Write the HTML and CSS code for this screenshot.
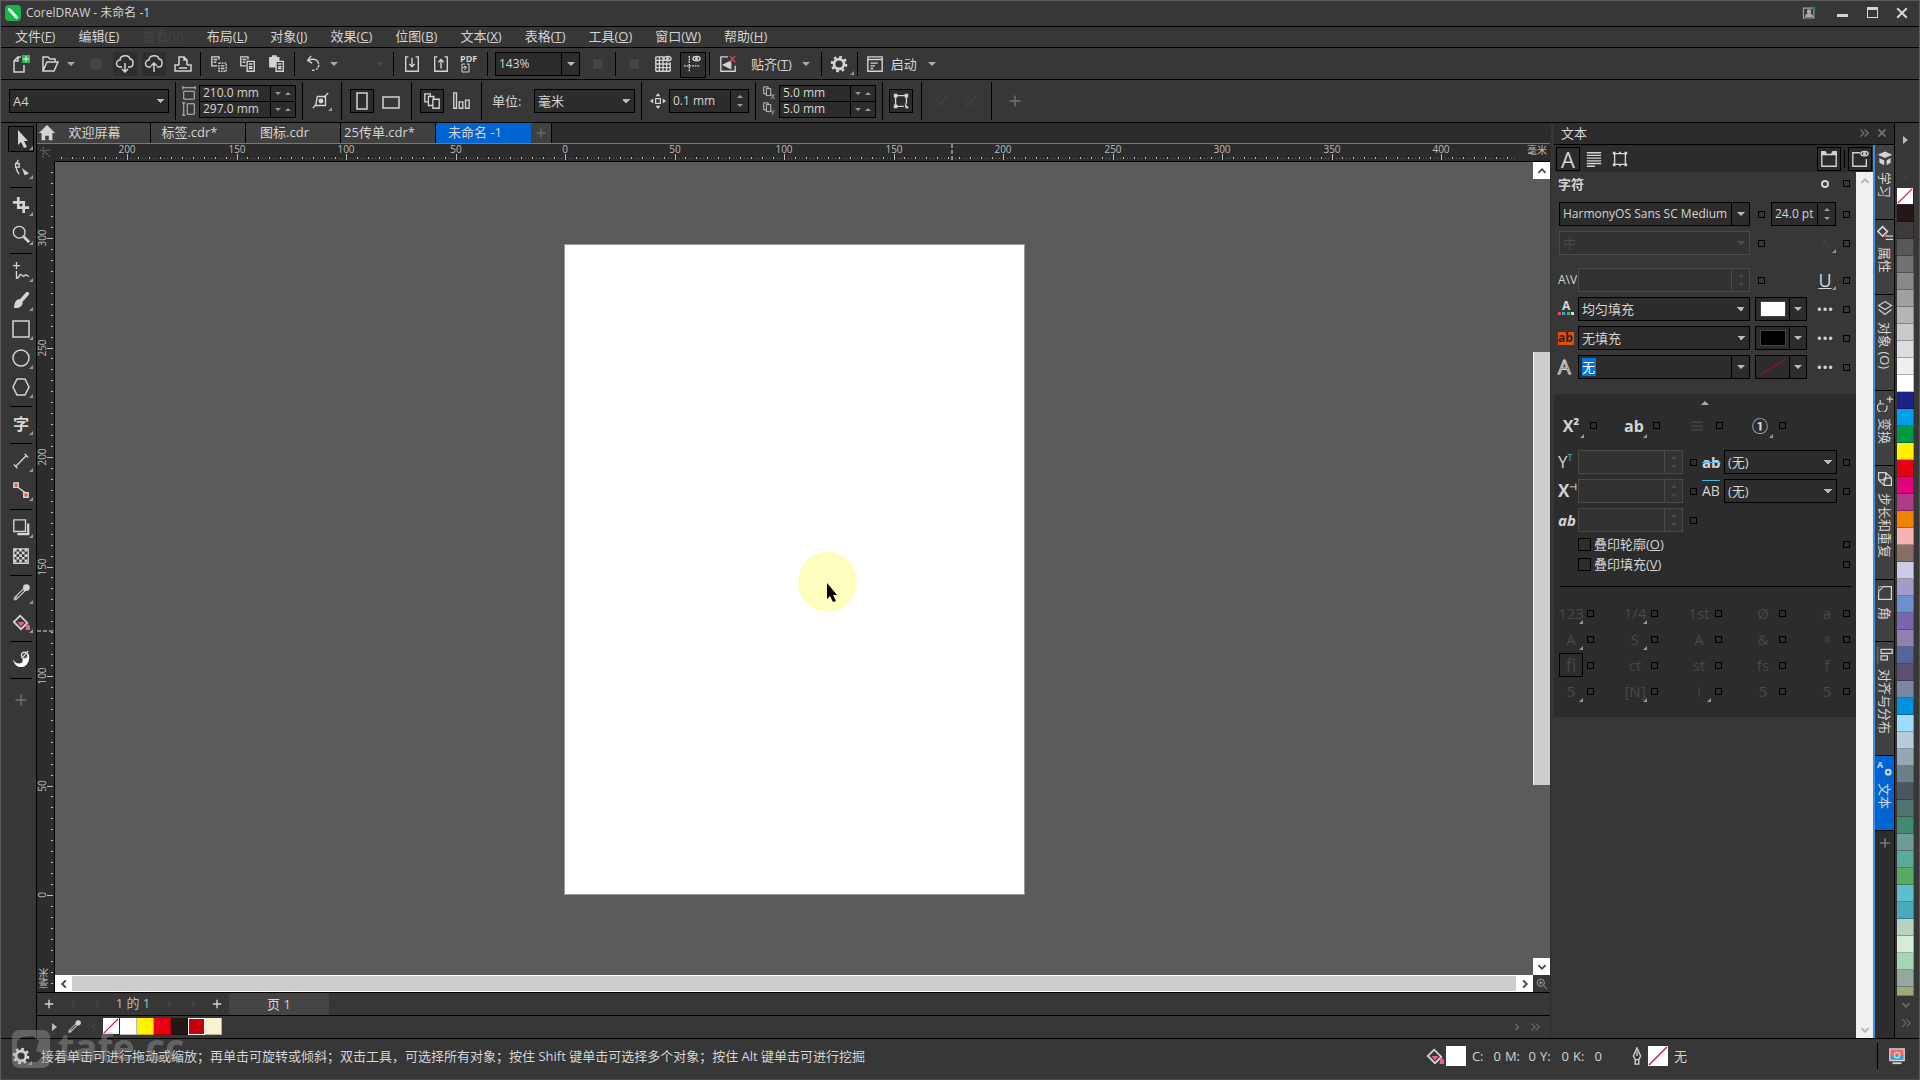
FILE: index.html
```html
<!DOCTYPE html>
<html lang="zh-CN">
<head>
<meta charset="utf-8">
<title>CorelDRAW - 未命名 -1</title>
<link rel="stylesheet" href="styles.css">
</head>
<body>
<svg class="sprite" aria-hidden="true">
  <symbol id="new" viewBox="0 0 20 20"><path d="M10 3H7L3 7v11h10v-7M7 3v4H3"/><path d="M11 1h8v8h-8z" fill="#2fb457" stroke="none"/><path d="M15 2v6M12 5h6" stroke="#eee" stroke-width="1"/></symbol>
  <symbol id="open" viewBox="0 0 20 20"><path d="M3 17V3h5l2 2h5v3M3 17h11l4-9H7z"/></symbol>
  <symbol id="save" viewBox="0 0 20 20"><path d="M3 3h14v14H3z" fill="currentColor" stroke="none"/></symbol>
  <symbol id="clouddown" viewBox="0 0 20 20"><path d="M7 13H5a3.500 3.500 0 0 1 0-7c0-5 9-6 10-1 4 0 4 8 0 8h-2M10 9v9M7 15l3 3 3-3"/></symbol>
  <symbol id="cloudup" viewBox="0 0 20 20"><path d="M7 13H5a3.500 3.500 0 0 1 0-7c0-5 9-6 10-1 4 0 4 8 0 8h-2M10 18V9M7 12l3-3 3 3"/></symbol>
  <symbol id="print" viewBox="0 0 20 20"><path d="M6 11V3h5l3 3v5M11 3v3h3M6 11H2v6h16v-6h-4M6 14h8"/></symbol>
  <symbol id="cut" viewBox="0 0 20 20"><path d="M8 12H2V2h8v3M4 5h4M4 8h3"/><path d="M10 9h8v9h-8z" stroke-dasharray="2 1"/><path d="M12 12h4M12 15h4"/></symbol>
  <symbol id="copy" viewBox="0 0 20 20"><path d="M8 12H2V2h8v3M4 5h4M4 8h3"/><path d="M9 7h8v11H9zM11 10h4M11 13h4M11 15h4"/></symbol>
  <symbol id="paste" viewBox="0 0 20 20"><path d="M2 3h3V1h4v2h3v3H8v7H2z" fill="currentColor"/><path d="M9 7h8v11H9zM11 10h4M11 13h4M11 15h4"/></symbol>
  <symbol id="undo" viewBox="0 0 20 20"><path d="M5 6c8-4 13 2 11 7-1 3-4 4-7 4" stroke-dasharray="14 1 3 1 2 2"/><path d="M8 1L4 6l5 3"/></symbol>
  <symbol id="import" viewBox="0 0 20 20"><path d="M6 2H3v16h14V2h-3M10 3v10M7 10l3 3 3-3"/></symbol>
  <symbol id="export" viewBox="0 0 20 20"><path d="M6 2H3v16h14V2h-3M10 15V5M7 8l3-3 3 3"/></symbol>
  <symbol id="pdf" viewBox="0 0 20 20"><text x="0" y="8" font-size="9" font-weight="bold">PDF</text><path d="M5 10H2v8h7v-8H7M5 16v-4M3 14l2-2 2 2" stroke-width="1"/></symbol>
  <symbol id="grid" viewBox="0 0 20 20"><path d="M2 2h9M2 6h16M2 10h16M2 14h16M2 18h16M2 2v16M6 2v16M10 2v16M14 8v10M18 8v10"/><ellipse cx="15" cy="4" rx="4" ry="2.500"/><circle cx="15" cy="4" r="1"/></symbol>
  <symbol id="guides" viewBox="0 0 20 20"><path d="M7 1v18M1 12h18" stroke-dasharray="2 1"/><ellipse cx="15" cy="4" rx="4" ry="2.500"/><circle cx="15" cy="4" r="1"/></symbol>
  <symbol id="snapoff" viewBox="0 0 20 20"><path d="M10 2H2v16h16v-6"/><path d="M5 11l8-4v8z" fill="currentColor"/><path d="M12 1l6 7M18 1l-6 7" stroke="#e0425f"/></symbol>
  <symbol id="gear" viewBox="0 0 20 20"><circle cx="10" cy="10" r="5.500" stroke-width="3"/><circle cx="10" cy="10" r="8" stroke-width="2.500" stroke-dasharray="3.100 3.180"/></symbol>
  <symbol id="launch" viewBox="0 0 20 20"><path d="M2 2h16v16H2zM2 5h16M5 9h8M5 12h5M5 15h3"/></symbol>
  <symbol id="pagew" viewBox="0 0 16 16"><path d="M1 2h14M1 0v4M15 0v4M2 6h12v9H2z" stroke-width="1"/></symbol>
  <symbol id="pageh" viewBox="0 0 16 16"><path d="M2 1v14M0 1h4M0 15h4M6 2h8v12H6z" stroke-width="1"/></symbol>
  <symbol id="drawunit" viewBox="0 0 20 20"><path d="M6 5h9v10H4zM18 1l-5 5M5 13l-4 5"/><circle cx="10" cy="10" r="2" fill="currentColor"/></symbol>
  <symbol id="portrait" viewBox="0 0 20 20"><path d="M5 2h10v16H5z"/></symbol>
  <symbol id="landscape" viewBox="0 0 20 20"><path d="M2 6h16v11H2z"/></symbol>
  <symbol id="allpages" viewBox="0 0 20 20"><path d="M6 11H2V2h6v3M11 15H6V5h6v3M11 8h7v10h-7z"/></symbol>
  <symbol id="curpage" viewBox="0 0 20 20"><path d="M2 1h3v17H2zM8 11h4v7H8zM15 9h4v9h-4z"/></symbol>
  <symbol id="nudge" viewBox="0 0 20 20"><path d="M7 7h6v6H7z"/><path d="M10 0l3 4H7zM10 20l3-4H7zM0 10l4-3v6zM20 10l-4-3v6z" fill="currentColor" stroke="none"/></symbol>
  <symbol id="dupx" viewBox="0 0 16 16"><path d="M5 9H2V1h5v2M5 3h5v8H5z" stroke-width="1"/><text x="10" y="15" font-size="8">X</text></symbol>
  <symbol id="dupy" viewBox="0 0 16 16"><path d="M5 9H2V1h5v2M5 3h5v8H5z" stroke-width="1"/><text x="10" y="15" font-size="8">Y</text></symbol>
  <symbol id="treat" viewBox="0 0 20 20"><path d="M4 4h12v9M4 4v12h9"/><path d="M2 2h4v4H2zM14 2h4v4h-4zM2 14h4v4H2zM14 12l5 6h-4z" fill="currentColor" stroke="none"/></symbol>
  <symbol id="wand" viewBox="0 0 20 20"><path d="M3 10l4-5M4 17l12-13M10 12l4 4"/></symbol>
  <symbol id="plus" viewBox="0 0 20 20"><path d="M10 4v12M4 10h12" stroke-width="2"/></symbol>
  <symbol id="home" viewBox="0 0 20 20"><path d="M10 1l9 9h-3v8h-4v-5H8v5H4v-8H1z" fill="currentColor" stroke="none"/></symbol>
  <symbol id="pick" viewBox="0 0 20 20"><path d="M7 1v15l3-3 3 6 3-1-3-6h4z" fill="currentColor" stroke="none"/></symbol>
  <symbol id="shape" viewBox="0 0 20 20"><path d="M7 1C3 7 4 12 8 17"/><path d="M4 5h4v4H4z" fill="#373737"/><path d="M11 10l8 6-5 2z" fill="currentColor" stroke="none"/></symbol>
  <symbol id="crop" viewBox="0 0 20 20"><path d="M1 7h12v12M7 1v12h12" stroke-width="3"/></symbol>
  <symbol id="zoom" viewBox="0 0 20 20"><circle cx="8" cy="8" r="6.500"/><path d="M13 13l6 6" stroke-width="3"/></symbol>
  <symbol id="freehand" viewBox="0 0 20 20"><path d="M5 0v8M1 4h8M5 10v8c3 1 3-5 5-4s2 3 4 1 3 1 5 1"/></symbol>
  <symbol id="brush" viewBox="0 0 20 20"><path d="M17 3l-8 9" stroke-width="4" stroke-linecap="round"/><path d="M8 9l4 4c-1 5-5 6-10 6 1-4 1-9 6-10z" fill="currentColor" stroke="none"/></symbol>
  <symbol id="rect" viewBox="0 0 20 20"><path d="M2 2h16v16H2z"/></symbol>
  <symbol id="ellipse" viewBox="0 0 20 20"><circle cx="10" cy="10" r="8"/></symbol>
  <symbol id="polygon" viewBox="0 0 20 20"><path d="M6 2h8l4 8-4 8H6l-4-8z"/></symbol>
  <symbol id="type" viewBox="0 0 20 20"><text x="1" y="17" font-size="18" font-weight="bold">字</text></symbol>
  <symbol id="dimension" viewBox="0 0 20 20"><path d="M4 16L16 4M2 14l4 4M14 2l4 4"/></symbol>
  <symbol id="connector" viewBox="0 0 20 20"><path d="M4 5l12 9"/><path d="M2 2h5v5H2zM13 13h5v5h-5z" fill="#e8603c"/></symbol>
  <symbol id="shadow" viewBox="0 0 20 20"><path d="M2 2h13v13H2z"/><path d="M6 18h12V6" stroke-width="2.500"/></symbol>
  <symbol id="checker" viewBox="0 0 20 20"><path d="M2 2h16v16H2z"/><path d="M2 2h3v3H2zM8 2h3v3H8zM14 2h3v3h-3zM5 5h3v3H5zM11 5h3v3h-3zM2 8h3v3H2zM8 8h3v3H8zM14 8h3v3h-3zM5 11h3v3H5zM11 11h3v3h-3zM2 14h3v3H2zM8 14h3v3H8zM14 14h3v3h-3z" fill="currentColor" stroke="none"/></symbol>
  <symbol id="dropper" viewBox="0 0 20 20"><path d="M3 17L14 6" stroke-width="4"/><path d="M4 16L13 7" stroke="#373737"/><path d="M2 18l4-4" stroke="#e9a27c"/><circle cx="16" cy="4" r="3" fill="currentColor"/></symbol>
  <symbol id="bucket" viewBox="0 0 20 20"><path d="M9 3l8 8-7 7-8-8z" stroke-width="2"/><path d="M6 10h8l-4 5zM16 12l4 2v5h-5z" fill="#e8637c" stroke="none"/></symbol>
  <symbol id="smear" viewBox="0 0 20 20"><path d="M1 10c2 5 7 6 10 4 2-2 0-4 1-6l3-4 3 0 1 2c1 8-4 13-9 13-5 0-8-4-9-9z" fill="#fff" stroke="none"/><circle cx="14" cy="6" r="3.500" fill="#373737"/><path d="M12 8l6-7"/></symbol>
  <symbol id="para" viewBox="0 0 20 20"><path d="M2 3h16M2 6h16M2 9h16M2 12h16M2 15h16M2 18h9"/></symbol>
  <symbol id="frame" viewBox="0 0 20 20"><path d="M4 4h12v12H4z"/><path d="M2 2h3v3H2zM15 2h3v3h-3zM2 15h3v3H2zM15 15h3v3h-3zM9 2h2v2H9zM9 16h2v2H9z" fill="currentColor" stroke="none"/></symbol>
  <symbol id="dockwin" viewBox="0 0 20 20"><path d="M2 5V2h3l2 3h6l2-3h3v16H2V5"/><path d="M2 5V2h4l1 3zM18 5V2h-4l-1 3z" fill="currentColor"/></symbol>
  <symbol id="dockeye" viewBox="0 0 20 20"><path d="M10 3H2v15h15v-8"/><ellipse cx="15" cy="4" rx="4" ry="2.500"/><circle cx="15" cy="4" r="1"/></symbol>
  <symbol id="learn" viewBox="0 0 20 20"><path d="M1 6l9-4 9 4-9 4zM3 10l6 3v6l-6-3zM12 13l5-3v6l-5 3z" fill="currentColor" stroke="none"/></symbol>
  <symbol id="props" viewBox="0 0 20 20"><path d="M7 2l6 6-6 6-6-6z" stroke-width="2"/><path d="M13 10l-4 5" stroke="#e8603c"/><path d="M11 14h9M11 18h9"/></symbol>
  <symbol id="layers" viewBox="0 0 20 20"><path d="M10 2l8 5-8 5-8-5zM2 12l8 6 8-6"/></symbol>
  <symbol id="transform" viewBox="0 0 20 20"><path d="M4 9a6 6 0 1 0 8 3M4 5v5h5M16 0v8M12 4h8"/></symbol>
  <symbol id="step" viewBox="0 0 20 20"><path d="M2 2h9v9H2zM9 9h9v9H9zM11 2l7 7M2 11l7 7"/></symbol>
  <symbol id="corner" viewBox="0 0 20 20"><path d="M8 2h10v16H2V8z"/><path d="M2 6V2h5" stroke-dasharray="1 1"/></symbol>
  <symbol id="align" viewBox="0 0 20 20"><path d="M5 3h14v5H5zM5 11h8v5H5z"/><path d="M1 0v20" stroke="#36a3b8" stroke-dasharray="2 1"/></symbol>
  <symbol id="textdock" viewBox="0 0 20 20"><text x="0" y="9" font-size="11" font-weight="bold">A</text><circle cx="14" cy="14" r="3" stroke-width="2.500"/></symbol>
  <symbol id="pen" viewBox="0 0 20 20"><path d="M10 1l4 9-2 4H8l-2-4zM10 5v5M8 14h4v5H8z"/></symbol>
  <symbol id="monitor" viewBox="0 0 20 20"><path d="M2 2h16v13H2z" fill="#f06a62"/><path d="M3 9h14v5H3z" fill="#2aa9df" stroke="none"/><circle cx="10" cy="9" r="3"/><path d="M5 18h10" stroke-width="2"/></symbol>
  <symbol id="user" viewBox="0 0 20 20"><path d="M2 3h15v14H2z"/><circle cx="10" cy="8" r="2.500" fill="currentColor"/><path d="M5 15c1-5 9-5 10 0z" fill="currentColor"/><path d="M14 1h5v5h-5z" fill="#2b7d72" stroke="none"/></symbol>
  <symbol id="none" viewBox="0 0 20 20"><path d="M0 0h20v20H0z" fill="#fff" stroke="none"/><path d="M1 19L19 1" stroke="#c02038" stroke-width="1.500"/></symbol>
  <symbol id="left" viewBox="0 0 20 20"><path d="M13 4l-6 6 6 6" stroke-width="3"/></symbol>
  <symbol id="right" viewBox="0 0 20 20"><path d="M7 4l6 6-6 6" stroke-width="3"/></symbol>
  <symbol id="up" viewBox="0 0 20 20"><path d="M4 13l6-6 6 6" stroke-width="3"/></symbol>
  <symbol id="down" viewBox="0 0 20 20"><path d="M4 7l6 6 6-6" stroke-width="3"/></symbol>
  <symbol id="dbl" viewBox="0 0 20 20"><path d="M4 4l6 6-6 6M11 4l6 6-6 6" stroke-width="2"/></symbol>
  <symbol id="close" viewBox="0 0 20 20"><path d="M4 4l12 12M16 4L4 16" stroke-width="2.500"/></symbol>
  <symbol id="navzoom" viewBox="0 0 20 20"><circle cx="8" cy="8" r="6"/><path d="M8 5v6M5 8h6M13 13l5 5"/></symbol>
</svg>

<div class="window">
  <header class="title">
    <svg class="logo" viewBox="0 0 16 16" aria-hidden="true"><rect width="16" height="16" rx="4" fill="#17b54a"/><path d="M3 3l3 1 7 8-1 2-2-1-7-8z" fill="#fff"/></svg>
    <span class="grow">CorelDRAW - 未命名 -1</span>
    <button aria-label="账户"><svg class="ic s14"><use href="#user"/></svg></button>
    <button class="min" aria-label="最小化"><i></i></button>
    <button class="max" aria-label="最大化"><i></i></button>
    <button aria-label="关闭"><svg class="ic s16"><use href="#close"/></svg></button>
  </header>

  <nav class="menu">
    <button>文件(<u>F</u>)</button><button>编辑(<u>E</u>)</button><button disabled>查看(<u>V</u>)</button><button>布局(<u>L</u>)</button><button>对象(<u>J</u>)</button><button>效果(<u>C</u>)</button><button>位图(<u>B</u>)</button><button>文本(<u>X</u>)</button><button>表格(<u>T</u>)</button><button>工具(<u>O</u>)</button><button>窗口(<u>W</u>)</button><button>帮助(<u>H</u>)</button>
  </nav>

  <div class="bar standard" role="toolbar">
    <button class="slot" aria-label="新建"><svg class="ic"><use href="#new"/></svg></button>
    <button class="slot" aria-label="打开"><svg class="ic"><use href="#open"/></svg></button>
    <button class="dd" aria-label="打开选项"></button>
    <button class="slot" disabled aria-label="保存"><svg class="ic s16"><use href="#save"/></svg></button>
    <button class="slot tint" aria-label="从云端下载"><svg class="ic"><use href="#clouddown"/></svg></button>
    <button class="slot tint" aria-label="上传到云端"><svg class="ic"><use href="#cloudup"/></svg></button>
    <button class="slot" aria-label="打印"><svg class="ic"><use href="#print"/></svg></button>
    <i class="sep"></i>
    <button class="slot" aria-label="剪切"><svg class="ic s18"><use href="#cut"/></svg></button>
    <button class="slot" aria-label="复制"><svg class="ic s18"><use href="#copy"/></svg></button>
    <button class="slot" aria-label="粘贴"><svg class="ic s18"><use href="#paste"/></svg></button>
    <i class="sep"></i>
    <button class="slot" aria-label="撤消"><svg class="ic s18"><use href="#undo"/></svg></button>
    <button class="dd" aria-label="撤消列表"></button>
    <button class="slot" disabled aria-label="重做"></button>
    <button class="dd" disabled aria-label="重做列表"></button>
    <i class="sep"></i>
    <button class="slot" aria-label="导入"><svg class="ic s18"><use href="#import"/></svg></button>
    <button class="slot" aria-label="导出"><svg class="ic s18"><use href="#export"/></svg></button>
    <button class="slot" aria-label="发布为 PDF"><svg class="ic"><use href="#pdf"/></svg></button>
    <i class="sep"></i>
    <div class="combo split zoomlevel"><input aria-label="缩放级别" value="143%"></div>
    <button class="slot" disabled aria-label="全屏预览"><svg class="ic s14"><use href="#save"/></svg></button>
    <i class="sep"></i>
    <button class="slot" disabled aria-label="显示标尺"><svg class="ic s14"><use href="#save"/></svg></button>
    <button class="slot" aria-label="显示网格"><svg class="ic s18"><use href="#grid"/></svg></button>
    <button class="slot boxed" aria-label="显示辅助线"><svg class="ic s18"><use href="#guides"/></svg></button>
    <i class="sep"></i>
    <button class="slot" aria-label="关闭贴齐"><svg class="ic s18"><use href="#snapoff"/></svg></button>
    <button class="wordbtn snap">贴齐(<u>T</u>)</button><button class="dd" aria-label="贴齐选项"></button>
    <i class="sep"></i>
    <button class="slot fly" aria-label="选项"><svg class="ic s18"><use href="#gear"/></svg></button>
    <i class="sep"></i>
    <button class="slot" aria-label="应用程序启动器"><svg class="ic s18"><use href="#launch"/></svg></button>
    <button class="wordbtn">启动</button><button class="dd" aria-label="启动列表"></button>
  </div>

  <div class="bar property" role="toolbar">
    <select class="combo-select w160" aria-label="页面大小"><option>A4</option></select>
    <i class="sep mid"></i>
    <div class="stack">
      <label><svg class="ic s14"><use href="#pagew"/></svg><span class="num flat"><input value="210.0 mm" aria-label="页面宽度"><span class="spin"><button aria-label="减"></button><button aria-label="加"></button></span></span></label>
      <label><svg class="ic s14"><use href="#pageh"/></svg><span class="num flat"><input value="297.0 mm" aria-label="页面高度"><span class="spin"><button aria-label="减"></button><button aria-label="加"></button></span></span></label>
    </div>
    <i class="sep mid"></i>
    <div class="group"><button class="btn fly" aria-label="自动适合页面"><svg class="ic s18"><use href="#drawunit"/></svg></button></div>
    <i class="sep wide"></i>
    <div class="group"><button class="btn on" aria-label="纵向"><svg class="ic"><use href="#portrait"/></svg></button><button class="btn" aria-label="横向"><svg class="ic"><use href="#landscape"/></svg></button></div>
    <i class="sep wide"></i>
    <div class="group"><button class="btn on" aria-label="所有页面"><svg class="ic s18"><use href="#allpages"/></svg></button><button class="btn" aria-label="当前页面"><svg class="ic s18"><use href="#curpage"/></svg></button></div>
    <i class="sep wide"></i>
    <label class="unit" for="unit">单位:</label>
    <select class="combo-select w101" id="unit"><option>毫米</option></select>
    <i class="sep mid"></i>
    <label class="nudge"><svg class="ic s16"><use href="#nudge"/></svg><span class="num"><input value="0.1 mm" aria-label="微调距离"><span class="spin"><button aria-label="加"></button><button aria-label="减"></button></span></span></label>
    <i class="sep mid"></i>
    <div class="stack">
      <label><svg class="ic s14"><use href="#dupx"/></svg><span class="num flat"><input value="5.0 mm" aria-label="再制距离 X"><span class="spin"><button aria-label="减"></button><button aria-label="加"></button></span></span></label>
      <label><svg class="ic s14"><use href="#dupy"/></svg><span class="num flat"><input value="5.0 mm" aria-label="再制距离 Y"><span class="spin"><button aria-label="减"></button><button aria-label="加"></button></span></span></label>
    </div>
    <i class="sep mid"></i>
    <div class="group"><button class="btn on" aria-label="所有对象视为已填充"><svg class="ic s18"><use href="#treat"/></svg></button></div>
    <i class="sep wide"></i>
    <div class="group"><button class="btn" disabled aria-label="描摹"><svg class="ic s16"><use href="#wand"/></svg></button><button class="btn" disabled aria-label="编辑"><svg class="ic s16"><use href="#wand"/></svg></button></div>
    <i class="sep wide"></i>
    <button class="btn dim" aria-label="自定义"><svg class="ic s18"><use href="#plus"/></svg></button>
  </div>

  <main class="work">
    <aside class="toolbox">
      <button class="tool on fly" aria-label="选择"><svg class="ic"><use href="#pick"/></svg></button>
      <button class="tool fly" aria-label="形状"><svg class="ic s18"><use href="#shape"/></svg></button><hr>
      <button class="tool fly" aria-label="裁剪"><svg class="ic s18"><use href="#crop"/></svg></button>
      <button class="tool fly" aria-label="缩放"><svg class="ic s18"><use href="#zoom"/></svg></button><hr>
      <button class="tool fly" aria-label="手绘"><svg class="ic s18"><use href="#freehand"/></svg></button>
      <button class="tool fly" aria-label="艺术笔"><svg class="ic s18"><use href="#brush"/></svg></button>
      <button class="tool fly" aria-label="矩形"><svg class="ic"><use href="#rect"/></svg></button>
      <button class="tool fly" aria-label="椭圆形"><svg class="ic"><use href="#ellipse"/></svg></button>
      <button class="tool fly" aria-label="多边形"><svg class="ic"><use href="#polygon"/></svg></button><hr>
      <button class="tool fly" aria-label="文本"><svg class="ic s18"><use href="#type"/></svg></button><hr>
      <button class="tool fly" aria-label="平行度量"><svg class="ic s18"><use href="#dimension"/></svg></button>
      <button class="tool fly" aria-label="连接器"><svg class="ic s18"><use href="#connector"/></svg></button><hr>
      <button class="tool fly" aria-label="阴影"><svg class="ic s18"><use href="#shadow"/></svg></button>
      <button class="tool" aria-label="透明度"><svg class="ic s18"><use href="#checker"/></svg></button><hr>
      <button class="tool fly" aria-label="颜色滴管"><svg class="ic s18"><use href="#dropper"/></svg></button>
      <button class="tool fly" aria-label="交互式填充"><svg class="ic s18"><use href="#bucket"/></svg></button><hr>
      <button class="tool" aria-label="涂抹"><svg class="ic s18"><use href="#smear"/></svg></button><hr>
      <button class="tool add" aria-label="自定义"><svg class="ic s18"><use href="#plus"/></svg></button>
    </aside>

    <section class="doc">
      <div class="tabs">
        <button class="hometab" aria-label="主页"><svg class="ic s18"><use href="#home"/></svg></button>
        <button>欢迎屏幕</button><button>标签.cdr*</button><button>图标.cdr</button><button>25传单.cdr*</button><button class="active">未命名 -1</button>
        <button class="addtab" aria-label="新建文档"><svg class="ic s14"><use href="#plus"/></svg></button>
      </div>
      <div class="view">
        <div class="origin"><svg class="ic s14" viewBox="0 0 20 20"><path d="M2 6h16M6 2v16M8 8l8 8" stroke-dasharray="2 2"/></svg></div>
        <svg class="ruler" id="hruler"></svg><span class="hunit">毫米</span>
        <svg class="ruler" id="vruler"></svg><span class="vunit">毫米</span>
        <div class="canvas">
          <div class="paper"></div>
          <div class="halo"></div>
          <svg class="pointer" viewBox="0 0 10 19"><path d="M0 0v16l3-3 3 6 3-1-3-6h4z"/></svg>
        </div>
        <div class="vscroll"><button aria-label="向上"><svg class="ic s12"><use href="#up"/></svg></button><i class="track"></i><i class="thumb"></i><i class="rest"></i><button aria-label="向下"><svg class="ic s12"><use href="#down"/></svg></button></div>
        <div class="hscroll"><button aria-label="向左"><svg class="ic s12"><use href="#left"/></svg></button><i class="thumb"></i><button aria-label="向右"><svg class="ic s12"><use href="#right"/></svg></button></div>
        <button class="nav" aria-label="导航器"><svg class="ic s12"><use href="#navzoom"/></svg></button>
      </div>
      <div class="pages">
        <button aria-label="在前面添加页"><svg class="ic s14"><use href="#plus"/></svg></button>
        <button disabled aria-label="第一页"><svg class="ic s10"><use href="#left"/></svg></button>
        <button disabled aria-label="上一页"><svg class="ic s10"><use href="#left"/></svg></button>
        <span class="count">1 的 1</span>
        <button disabled aria-label="下一页"><svg class="ic s10"><use href="#right"/></svg></button>
        <button disabled aria-label="最后一页"><svg class="ic s10"><use href="#right"/></svg></button>
        <button aria-label="在后面添加页"><svg class="ic s14"><use href="#plus"/></svg></button>
        <button class="pagetab">页 1</button>
      </div>
      <div class="docpal">
        <button class="tri" aria-label="调色板菜单"></button>
        <button class="drop" aria-label="滴管"><svg class="ic s14"><use href="#dropper"/></svg></button>
        <button disabled aria-label="向左滚动"><svg class="ic s10"><use href="#left"/></svg></button>
        <div class="chips" id="docchips"></div>
        <span class="grow"></span>
        <button class="faint" aria-label="向右滚动"><svg class="ic s10"><use href="#right"/></svg></button>
        <button class="faint" aria-label="展开"><svg class="ic s12"><use href="#dbl"/></svg></button>
      </div>
    </section>

    <aside class="docker">
      <div class="dockhead"><span class="grow">文本</span><button aria-label="折叠"><svg class="ic s12"><use href="#dbl"/></svg></button><button aria-label="关闭泊坞窗"><svg class="ic s12"><use href="#close"/></svg></button></div>
      <div class="dockmain">
        <div class="pane">
          <div class="panetools">
            <button class="btn on glyph" aria-label="字符">A</button>
            <button class="btn" aria-label="段落"><svg class="ic s18"><use href="#para"/></svg></button>
            <button class="btn" aria-label="图文框"><svg class="ic s18"><use href="#frame"/></svg></button>
            <span class="grow"></span>
            <button class="btn on" aria-label="停靠"><svg class="ic s18"><use href="#dockwin"/></svg></button>
            <i class="sep"></i>
            <button class="btn on" aria-label="显示"><svg class="ic s18"><use href="#dockeye"/></svg></button>
          </div>
          <div class="scrollrow">
            <div class="props">
              <div class="rows">
                <div class="row head"><h2>字符</h2><span class="grow"></span><button class="icbtn" aria-label="设置"><svg class="ic s10" viewBox="0 0 20 20"><circle cx="10" cy="10" r="6" stroke-width="4"/></svg></button><button class="pin" aria-label="锁定"></button></div>
                <div class="row"><div class="combo split font"><input aria-label="字体" value="HarmonyOS Sans SC Medium"></div><button class="pin near" aria-label="锁定字体"></button><span class="num size"><input aria-label="字体大小" value="24.0 pt"><span class="spin"><button aria-label="加"></button><button aria-label="减"></button></span></span><span class="grow"></span><button class="pin" aria-label="锁定大小"></button></div>
                <div class="row"><select class="combo-select off font" disabled aria-label="字体样式"><option>中</option></select><button class="pin near" aria-label="锁定样式"></button><span class="grow"></span><button class="icbtn fly" disabled>A</button><button class="pin" aria-label="锁定"></button></div>
                <div class="row kern"><span class="lead sm">A\V</span><span class="num off field"><input disabled aria-label="字距"><span class="spin"><button disabled aria-label="加"></button><button disabled aria-label="减"></button></span></span><button class="pin near" aria-label="锁定字距"></button><span class="grow"></span><button class="icbtn fly under" aria-label="下划线">U</button><button class="pin" aria-label="锁定下划线"></button></div>
                <div class="row"><span class="lead"><svg class="ic s16" viewBox="0 0 16 16"><text x="4" y="11" font-size="12" font-weight="bold">A</text><g stroke="none"><path d="M0 13h3v3H0z" fill="#e05050"/><path d="M4 13h3v3H4z" fill="#36a0e0"/><path d="M9 13h3v3H9z" fill="#40b860"/><path d="M13 13h3v3h-3z" fill="#ddd"/></g></svg></span><select class="combo-select field" aria-label="填充类型"><option>均匀填充</option></select><button class="color" aria-label="文本颜色"><i class="white"></i></button><button class="dots" aria-label="填充设置">•••</button><button class="pin" aria-label="锁定填充"></button></div>
                <div class="row"><span class="lead"><b class="abtag">ab</b></span><select class="combo-select field" aria-label="背景填充类型"><option>无填充</option></select><button class="color" aria-label="背景颜色"><i class="black"></i></button><button class="dots" aria-label="背景设置">•••</button><button class="pin" aria-label="锁定背景"></button></div>
                <div class="row"><span class="lead hollow">A</span><div class="combo split field"><input class="picked" aria-label="轮廓宽度" value="无"></div><button class="color" aria-label="轮廓颜色"><i class="slash"></i></button><button class="dots" aria-label="轮廓设置">•••</button><button class="pin" aria-label="锁定轮廓"></button></div>
              </div>
              <div class="more">
                <button class="collapse" aria-label="收起"></button>
                <div class="quad">
                  <button class="fly">X²</button><button class="pin" aria-label="锁定位置"></button>
                  <button class="fly">ab</button><button class="pin" aria-label="锁定大写"></button>
                  <button disabled>≡</button><button class="pin" aria-label="锁定"></button>
                  <button class="fly">①</button><button class="pin" aria-label="锁定数字"></button>
                </div>
                <div class="row"><span class="lead">Y<sup>T</sup></span><span class="num off short"><input disabled aria-label="垂直偏移"><span class="spin"><button disabled aria-label="加"></button><button disabled aria-label="减"></button></span></span><button class="pin side" aria-label="锁定"></button><span class="lead strike">ab</span><select class="combo-select w113" aria-label="删除线"><option>(无)</option></select><span class="grow"></span><button class="pin" aria-label="锁定"></button></div>
                <div class="row"><span class="lead strong">X<sup>⊣</sup></span><span class="num off short"><input disabled aria-label="水平偏移"><span class="spin"><button disabled aria-label="加"></button><button disabled aria-label="减"></button></span></span><button class="pin side" aria-label="锁定"></button><span class="lead over">AB</span><select class="combo-select w113" aria-label="上划线"><option>(无)</option></select><span class="grow"></span><button class="pin" aria-label="锁定"></button></div>
                <div class="row"><span class="lead tilt">ab</span><span class="num off short"><input disabled aria-label="字符角度"><span class="spin"><button disabled aria-label="加"></button><button disabled aria-label="减"></button></span></span><button class="pin side" aria-label="锁定"></button></div>
                <div class="checks">
                  <div><input type="checkbox" id="oo"><label for="oo">叠印轮廓(<u>O</u>)</label><span class="grow"></span><button class="pin" aria-label="锁定"></button></div>
                  <div><input type="checkbox" id="of"><label for="of">叠印填充(<u>V</u>)</label><span class="grow"></span><button class="pin" aria-label="锁定"></button></div>
                </div>
                <hr>
                <div class="opentype" id="opentype"></div>
              </div>
            </div>
            <div class="panescroll"><button aria-label="向上滚动"><svg class="ic s12"><use href="#up"/></svg></button><button aria-label="向下滚动"><svg class="ic s12"><use href="#down"/></svg></button></div>
          </div>
        </div>
        <div class="docktabs">
          <button><svg class="ic s16"><use href="#learn"/></svg>学习</button>
          <button><svg class="ic s16"><use href="#props"/></svg>属性</button>
          <button><svg class="ic s16"><use href="#layers"/></svg>对象 (O)</button>
          <button><svg class="ic s16"><use href="#transform"/></svg>变换</button>
          <button><svg class="ic s16"><use href="#step"/></svg>步长和重复</button>
          <button><svg class="ic s16"><use href="#corner"/></svg>角</button>
          <button><svg class="ic s16"><use href="#align"/></svg>对齐与分布</button>
          <button class="active"><svg class="ic s16"><use href="#textdock"/></svg>文本</button>
          <button class="adddock" aria-label="添加泊坞窗"><svg class="ic s16"><use href="#plus"/></svg></button>
        </div>
      </div>
    </aside>

    <aside class="palette">
      <button class="tri" aria-label="调色板菜单"></button>
      <button class="faint" aria-label="向上滚动"><svg class="ic s10"><use href="#up"/></svg></button>
      <div class="chips" id="chips"></div>
      <button class="faint" aria-label="向下滚动"><svg class="ic s12"><use href="#down"/></svg></button>
      <button class="faint" aria-label="展开"><svg class="ic s12"><use href="#dbl"/></svg></button>
    </aside>
  </main>

  <footer class="status">
    <button class="fly" aria-label="状态栏选项"><svg class="ic s18"><use href="#gear"/></svg></button>
    <span class="grow hint">接着单击可进行拖动或缩放；再单击可旋转或倾斜；双击工具，可选择所有对象；按住 Shift 键单击可选择多个对象；按住 Alt 键单击可进行挖掘</span>
    <div class="fillinfo"><svg class="ic s18"><use href="#bucket"/></svg><i class="sw"></i><span>C:</span><b>0</b><span>M:</span><b>0</b><span>Y:</span><b>0</b><span>K:</span><b>0</b></div>
    <div class="lineinfo"><svg class="ic s18"><use href="#pen"/></svg><svg class="sw"><use href="#none"/></svg><span>无</span></div>
    <i class="sep"></i>
    <button aria-label="颜色校样"><svg class="ic s18"><use href="#monitor"/></svg></button>
  </footer>
  <div class="watermark"><svg viewBox="0 0 38 38"><path d="M7 0h24a7 7 0 0 1 7 7v24a7 7 0 0 1-7 7H7a7 7 0 0 1-7-7V7a7 7 0 0 1 7-7zM10 7L5 11v15l8 6h12l8-8-9-3 3-10-6-5z" fill="#aaa" fill-rule="evenodd"/></svg><span>tafe.cc</span></div>
</div>
<script src="app.js"></script>
</body>
</html>
```
FILE: styles.css
```css
* { box-sizing: border-box; }
body { margin: 0; background: #373737; color: #d4d4d4; font: 13px/18px "Open Sans", "Noto Sans CJK SC", sans-serif; }
button, input, select { font: inherit; color: inherit; background: none; border: 0; padding: 0; margin: 0; border-radius: 0; }
button { position: relative; display: flex; align-items: center; justify-content: center; flex: none; white-space: nowrap; }
button:disabled { color: #454545; }
input { min-width: 0; outline: 0; }
h2 { margin: 0; font-size: 13px; line-height: 18px; }
.sprite { display: none; }
.grow { flex: 1; }
.ic { width: 20px; height: 20px; fill: none; stroke: currentColor; stroke-width: 1.5; flex: none; writing-mode: horizontal-tb; }
.ic text, symbol text { fill: currentColor; stroke: none; }
.s18 { width: 18px; height: 18px; }
.s16 { width: 16px; height: 16px; }
.s14 { width: 14px; height: 14px; }
.s12 { width: 12px; height: 12px; }
.s10 { width: 10px; height: 10px; }
.fly::after { content: ""; position: absolute; right: 0; bottom: 1px; border: 2px solid; border-color: transparent #999 #999 transparent; }

.window { min-height: 100vh; display: flex; flex-direction: column; border: 1px solid #5a5a5a; border-bottom-color: #4a4a4a; position: relative; }
.title { height: 26px; display: flex; align-items: center; padding: 0 2px 2px 4px; border-bottom: 1px solid #000; }
.logo { width: 16px; height: 18px; margin-right: 5px; }
.title > span { font-size: 12px; }
.title button { width: 30px; height: 24px; }
.title button:first-of-type { margin-right: 3px; color: #aaa; }
.min i { width: 11px; height: 3px; background: currentColor; margin-top: 6px; }
.max i { width: 11px; height: 11px; border: 1px solid; border-top-width: 3px; }
.menu { height: 21px; display: flex; padding: 0 0 2px 2px; border-bottom: 1px solid #000; }
.menu button { padding: 0 11px 0 12px; }

.bar { display: flex; align-items: center; border-bottom: 1px solid #000; }
.standard { height: 32px; padding-left: 5px; }
.property { height: 43px; padding-left: 8px; }
.slot { width: 29px; height: 24px; z-index: 0; }
.dd { width: 17px; height: 24px; padding-right: 4px; }
.dd::after { content: ""; border: 4px solid transparent; border-top-color: #aaa; border-bottom: 0; }
.dd:disabled::after { border-top-color: #484848; }
.sep { flex: none; width: 7px; height: 24px; background: linear-gradient(#000, #000) center / 1px 100% no-repeat; }
.property .sep { height: 38px; }
.sep.mid { width: 13px; }
.sep.wide { width: 17px; }
.tint::before, .boxed::before { content: ""; position: absolute; left: 3px; top: 0; width: 24px; height: 24px; background: #2e2e2e; z-index: -1; }
.boxed::before { border: 1px solid #000; }
.wordbtn { padding: 0 8px 0 1px; }
.wordbtn.snap { padding: 0 7px 0 9px; }
.wordbtn + .dd { width: 19px; }
.btn { width: 24px; height: 24px; border: 1px solid transparent; }
.btn.on { border-color: #000; background: #2c2c2c; }
.dim { color: #666; margin-left: 3px; }
.group { display: flex; gap: 5px; }

.combo, .combo-select, .num { height: 24px; border: 1px solid #000; background: #2c2c2c; flex: none; }
.combo { position: relative; display: flex; align-items: center; padding-left: 3px; }
.combo input { width: calc(100% - 20px); font-size: 12px; }
.combo::after { content: ""; position: absolute; right: 4px; top: 9px; border: 4px solid transparent; border-top-color: #bbb; border-bottom: 0; }
.split::before { content: ""; position: absolute; right: 17px; top: 0; width: 1px; height: 22px; background: #000; }
.combo-select { appearance: none; padding: 0 20px 0 3px; background: #2c2c2c conic-gradient(from 315deg at 50% 100%, #bbb 90deg, transparent 0) no-repeat right 4px center / 8px 4px; background-image: conic-gradient(from 315deg at 50% 100%, #bbb 90deg, transparent 0); }
.zoomlevel { width: 85px; margin: 0 3px 0 4px; }
.w160 { width: 160px; }
.w101 { width: 101px; }
.w113 { width: 113px; }
.num { display: flex; }
.num input { flex: 1; padding-left: 3px; font-size: 12px; }
.spin { width: 18px; border-left: 1px solid #000; display: flex; flex-direction: column; align-items: center; justify-content: space-evenly; flex: none; }
.spin button::after { content: ""; border: 3px solid transparent; border-top-color: #999; border-bottom: 0; }
.spin button:disabled::after { border-top-color: #484848; }
.spin button:first-child::after { transform: rotate(180deg); }
.stack label { display: flex; align-items: center; height: 17px; gap: 3px; }
.stack label + label { margin-top: -1px; }
.num.flat { width: 97px; height: 17px; }
.flat .spin { width: 25px; flex-direction: row; }
.flat .spin button:first-child::after { transform: none; }
.flat .spin button:last-child::after { transform: rotate(180deg); }
.unit { width: 44px; padding-left: 2px; }
.nudge { display: flex; align-items: center; gap: 3px; padding-left: 2px; }
.nudge .num { width: 80px; }

.work { flex: 1; display: grid; grid-template-columns: 36px minmax(0, 1fr) 344px 24px; }
.toolbox { display: flex; flex-direction: column; align-items: center; padding: 2px 0 0 4px; border-right: 1px solid #000; }
.tool { width: 24px; height: 24px; margin: 2px 0 3px; }
.tool.on { outline: 1px solid #000; background: #2c2c2c; }
.toolbox hr { width: 22px; height: 8px; margin: 0; border: 0; background: linear-gradient(#000, #000) center / 100% 1px no-repeat; }
.add { color: #666; margin-top: 6px; }

.doc { display: flex; flex-direction: column; background: #373737; border-right: 1px solid #2c2c2c; }
.tabs { height: 21px; display: flex; background: #2c2c2c; border-bottom: 1px solid #3b87c8; }
.tabs button { width: 95px; padding: 0 17px 2px 0; background: #404040; border-right: 1px solid #000; }
.tabs .hometab { width: 19px; padding: 0; border: 0; }
.tabs .active { background: #0064d2; border: 0; }
.tabs .addtab { width: 21px; padding: 0; color: #6a6a6a; }
.view { flex: 1; display: grid; grid-template: 18px 1fr 17px / 18px 1fr 17px; position: relative; }
.origin { background: #2c2c2c; color: #888; display: flex; align-items: center; justify-content: center; }
.ruler { background: #2c2c2c; width: 100%; height: 100%; font-size: 10px; fill: #bbb; stroke: none; }
#hruler { grid-column: 2 / 4; border-bottom: 1px solid #000; }
#vruler { grid-row: 2 / 4; grid-column: 1; border-right: 1px solid #000; }
.hunit, .vunit { position: absolute; font-size: 10px; line-height: 12px; color: #bbb; background: #2c2c2c; }
.hunit { right: 3px; top: 0; }
.vunit { left: 1px; bottom: 4px; writing-mode: vertical-rl; transform: rotate(180deg); }
.canvas { grid-column: 2; grid-row: 2; background: #5b5b5b; position: relative; overflow: hidden; }
.paper { position: absolute; left: 509px; top: 82px; width: 461px; height: 651px; background: #fff; border: 1px solid #999; }
.halo { position: absolute; left: 743px; top: 390px; width: 59px; height: 60px; border-radius: 50%; background: #fdfdbd; }
.pointer { position: absolute; left: 772px; top: 421px; width: 10px; height: 19px; }
.vscroll { grid-column: 3; grid-row: 2; display: flex; flex-direction: column; background: #5b5b5b; color: #444; }
.vscroll button, .hscroll button { width: 17px; height: 17px; background: #fff; }
.track { flex: 173; }
.vscroll .thumb { flex: 433; background: #cdcdcd; border-left: 1px solid #eee; }
.rest { flex: 173; }
.hscroll { grid-column: 2; grid-row: 3; display: flex; color: #444; }
.hscroll .thumb { flex: 1; background: #cdcdcd; border: solid #fff; border-width: 1px 0; }
.nav { grid-column: 3; grid-row: 3; color: #aaa; }
.pages { height: 24px; display: flex; border-top: 1px solid #000; border-bottom: 1px solid #000; }
.pages button { width: 24px; }
.count { width: 48px; text-align: center; line-height: 20px; color: #bbb; word-spacing: 0; }
.pages .pagetab { width: 100px; background: #444; }
.docpal { height: 22px; display: flex; align-items: center; padding: 0 6px 1px 8px; }
.docpal > button { width: 18px; }
.docpal > .drop { width: 22px; }
.tri::after { content: ""; border: 4px solid transparent; border-left: 5px solid #bbb; border-right: 0; }
.faint { color: #686868; }
.chips { display: flex; }
.chip { width: 17px; height: 17px; border: 1px solid #0004; border-width: 0 1px 1px 0; }
.chip.current { border: 1px solid #fff; }
.chip svg { width: 16px; height: 16px; }

.docker { display: flex; flex-direction: column; border-left: 3px solid #363636; border-right: 1px solid #000; background: #2c2c2c; }
.dockhead { height: 21px; display: flex; align-items: center; padding: 0 4px 2px 7px; gap: 2px; }
.dockhead button { width: 16px; color: #777; }
.dockmain { flex: 1; display: flex; border-top: 1px solid #000; }
.pane { flex: 1; display: flex; flex-direction: column; min-width: 0; border-right: 2px solid #3b8fe0; }
.panetools { height: 27px; display: flex; align-items: center; gap: 2px; padding: 0 1px 0 2px; }
.panetools .sep { height: 18px; width: 3px; }
.glyph { font-size: 22px; }
.scrollrow { flex: 1; display: flex; }
.props { flex: 1; min-width: 0; background: #373737; }
.rows { display: flex; flex-direction: column; gap: 5px; padding-bottom: 15px; }
.row { display: flex; align-items: center; height: 24px; padding: 0 6px 0 4px; }
.row.head { height: 25px; padding-bottom: 2px; }
.row.kern { margin-top: 8px; }
.pin { width: 7px; height: 7px; border: 1px solid #000; }
.near { margin: 0 6px 0 8px; }
.side { margin: 0 5px 0 7px; }
.font { width: 191px; margin-left: 1px; }
.field { width: 172px; }
.size { width: 65px; }
.short { width: 105px; }
.icbtn { width: 22px; height: 22px; margin-right: 7px; }
.off { border-color: #4a4a4a; background-color: #323232; color: #4a4a4a; opacity: 1; }
select.off { background-image: conic-gradient(from 315deg at 50% 100%, #4a4a4a 90deg, transparent 0); }
.off .spin { border-color: #4a4a4a; }
.lead { width: 20px; height: 20px; flex: none; line-height: 20px; font-size: 17px; display: flex; white-space: nowrap; }
.lead sup { font-size: 9px; line-height: 12px; color: #4db4e0; }
.lead.sm { font-size: 12px; }
.strong { font-weight: bold; }
.lead.strong sup { color: inherit; }
.under { text-decoration: underline; font-size: 18px; }
.abtag { background: #e0500c; color: #3a1a08; width: 16px; height: 13px; line-height: 11px; font-size: 12px; margin-top: 4px; }
.lead.hollow { font-size: 20px; color: #373737; -webkit-text-stroke: 1px #d4d4d4; }
.lead.strike { text-decoration: line-through #4db4e0; font-weight: bold; font-size: 15px; }
.lead.over { text-decoration: overline #4db4e0; font-size: 14px; }
.lead.tilt { font-style: italic; font-weight: bold; font-size: 15px; }
.strike + select, .over + select { margin-left: 2px; }
.color { width: 52px; height: 24px; margin-left: 5px; border: 1px solid #000; background: #2c2c2c linear-gradient(#000, #000) 33px 0 / 1px 100% no-repeat; justify-content: flex-start; padding-left: 4px; }
.color::after { content: ""; border: 4px solid transparent; border-top-color: #bbb; border-bottom: 0; margin-left: 8px; }
.color i { width: 26px; height: 16px; border: 1px solid #444; }
.white { background: #fff; }
.black { background: #000; }
.slash { background: linear-gradient(to bottom right, transparent 47%, #7a1830 47% 53%, transparent 53%); }
.color .slash { border: 0; }
.dots { flex: 1; font-size: 15px; }
.combo .picked { width: 14px; padding: 0; background: #0078d7; color: #fff; font-size: 13px; }
.more { background: #2c2c2c; padding-bottom: 13px; }
.collapse { width: 100%; height: 18px; }
.collapse::after { content: ""; border: 4px solid transparent; border-bottom-color: #aaa; border-top: 0; }
.quad { display: grid; grid-template-columns: repeat(4, 26px 37px); align-items: center; height: 38px; padding: 0 0 11px 4px; }
.quad button:nth-child(odd) { font-weight: bold; font-size: 16px; height: 26px; }
.quad .pin { margin-left: 6px; }
.more .row { margin-bottom: 5px; }
.more .row:nth-child(5) { margin-bottom: 2px; }
.checks > div { height: 20px; display: flex; align-items: center; padding: 0 6px 0 24px; }
.checks input { appearance: none; width: 13px; height: 13px; border: 1px solid #000; margin-right: 3px; }
.more hr { margin: 12px 5px 13px 6px; border: 0; border-top: 1px solid #000; }
.opentype { display: grid; grid-template-columns: repeat(4, 64px) 1fr; padding-left: 5px; }
.opentype > div { display: flex; align-items: center; gap: 4px; height: 26px; }
.opentype .feature { width: 24px; height: 24px; color: #484848; font-size: 15px; }
.opentype .ligature { border: 1px solid #000; font-size: 18px; }
.panescroll { width: 17px; background: #f0f0f0; display: flex; flex-direction: column; justify-content: space-between; color: #b0b0b0; }
.panescroll button { height: 17px; }
.docktabs { width: 19px; display: flex; flex-direction: column; flex: none; }
.docktabs button { writing-mode: vertical-rl; text-orientation: sideways; justify-content: flex-start; gap: 6px; padding: 5px 0 21px; background: #404040; border-bottom: 1px solid #000; width: 19px; }
.docktabs .active { background: #0064d2; }
.docktabs .adddock { padding: 4px 0; background: none; border: 0; color: #777; }

.palette { display: flex; flex-direction: column; align-items: center; padding: 9px 3px 0 0; }
.palette .chips { flex-direction: column; }
.palette .tri { height: 16px; }
.palette > .faint { height: 18px; }
.palette > .faint:nth-child(2) { margin: 21px 0 1px; color: #444; }
.palette .chip:last-child { height: 9px; }

.status { height: 41px; display: flex; align-items: center; border-top: 1px solid #000; padding: 0 11px 6px 9px; }
.status > button { width: 22px; height: 20px; }
.hint { padding-left: 9px; }
.fillinfo, .lineinfo { display: flex; align-items: center; }
.sw { width: 20px; height: 20px; background: #fff; margin: 0 6px 0 2px; }
.fillinfo b { width: 16px; text-align: right; font-weight: normal; margin-right: 4px; }
.fillinfo span { min-width: 13px; }
.lineinfo { margin-left: 22px; width: 246px; }
.status .sep { height: 26px; margin-right: 5px; }
.watermark { position: absolute; left: 11px; bottom: 10px; display: flex; gap: 8px; opacity: .38; pointer-events: none; }
.watermark svg { width: 38px; height: 40px; }
.watermark span { font: bold 38px/34px "Open Sans", sans-serif; color: #aaa; }
```
FILE: app.js
```js
const NS = 'http://www.w3.org/2000/svg';
const PX_PER_MM = 2.19;

function add(svg, tag, attrs, text) {
  const el = document.createElementNS(NS, tag);
  for (const k in attrs) el.setAttribute(k, attrs[k]);
  if (text !== undefined) el.textContent = text;
  svg.appendChild(el);
}

// Horizontal ruler: zero sits at the left edge of the paper.
const h = document.getElementById('hruler');
for (let mm = -230; mm <= 430; mm += 5) {
  const x = Math.round(510 + mm * PX_PER_MM);
  const major = mm % 50 === 0;
  add(h, 'rect', { x, y: major ? 10 : 13, width: 1, height: major ? 6 : 2 });
  add(h, 'rect', { x: x + 4, y: 14, width: 1, height: 1, opacity: 0.4 });
  add(h, 'rect', { x: x + 7, y: 14, width: 1, height: 1, opacity: 0.4 });
  if (major) add(h, 'text', { x, y: 9, 'text-anchor': 'middle' }, Math.abs(mm));
}
add(h, 'path', { d: 'M897 0v18', stroke: '#ddd', 'stroke-dasharray': '4 2' });

// Vertical ruler: zero sits at the bottom edge of the paper.
const v = document.getElementById('vruler');
for (let mm = -40; mm <= 330; mm += 5) {
  const y = Math.round(733 - mm * PX_PER_MM);
  const major = mm % 50 === 0;
  add(v, 'rect', { x: major ? 10 : 14, y, width: major ? 6 : 2, height: 1 });
  if (major) add(v, 'text', { x: 0, y: 0, 'text-anchor': 'middle', transform: `translate(9 ${y}) rotate(-90)` }, Math.abs(mm));
}
add(v, 'path', { d: 'M0 469h18', stroke: '#ddd', 'stroke-dasharray': '4 2' });

function chips(id, colors, current) {
  const box = document.getElementById(id);
  colors.forEach((c, i) => {
    const b = document.createElement('button');
    b.className = 'chip' + (i === current ? ' current' : '');
    b.setAttribute('aria-label', c);
    if (c === 'none') b.innerHTML = '<svg><use href="#none"/></svg>';
    else b.style.background = c;
    box.appendChild(b);
  });
}
chips('docchips', ['none', '#fff', '#fff100', '#e60012', '#231815', '#c7000b', '#fdf0cf'], 5);
chips('chips', ['none', '#231815', '#3e3a39', '#595757', '#727171', '#898989', '#9fa0a0', '#b5b5b6', '#c9caca', '#dcdddd', '#efefef', '#fff',
  '#1d2088', '#00a0e9', '#009944', '#fff100', '#e60012', '#e4007f', '#ae3d86', '#f08300', '#f5b2b2', '#857066', '#cfcae6', '#a59aca',
  '#6f8fd0', '#7a66ae', '#8f82b0', '#53669a', '#5c4f72', '#7a86a6', '#0091db', '#a0dcf8', '#b6ccd8', '#94a8b4', '#6b7f88', '#4a5760',
  '#4f7470', '#41896f', '#6f9a96', '#5aab96', '#5aa866', '#5cbfd0', '#4aa9bb', '#b6d3c0', '#d5ecd8', '#a5d6b4', '#94a89c', '#a0a878'], -1);

// OpenType features; the second value marks a fly-out.
const features = [['123', 1], ['1/4', 1], ['1st', 0], ['Ø', 0], ['a', 0], ['A', 1], ['S', 1], ['A', 0], ['&', 0], ['ᵃ', 0],
  ['fi', 0], ['ct', 0], ['st', 0], ['fs', 0], ['f', 0], ['5', 1], ['[N]', 1], ['i', 1], ['5', 0], ['5', 0]];
document.getElementById('opentype').innerHTML = features.map(([t, fly]) =>
  `<div><button disabled class="feature${fly ? ' fly' : ''}${t === 'fi' ? ' ligature' : ''}">${t}</button><button class="pin" aria-label="锁定"></button></div>`).join('');
```
